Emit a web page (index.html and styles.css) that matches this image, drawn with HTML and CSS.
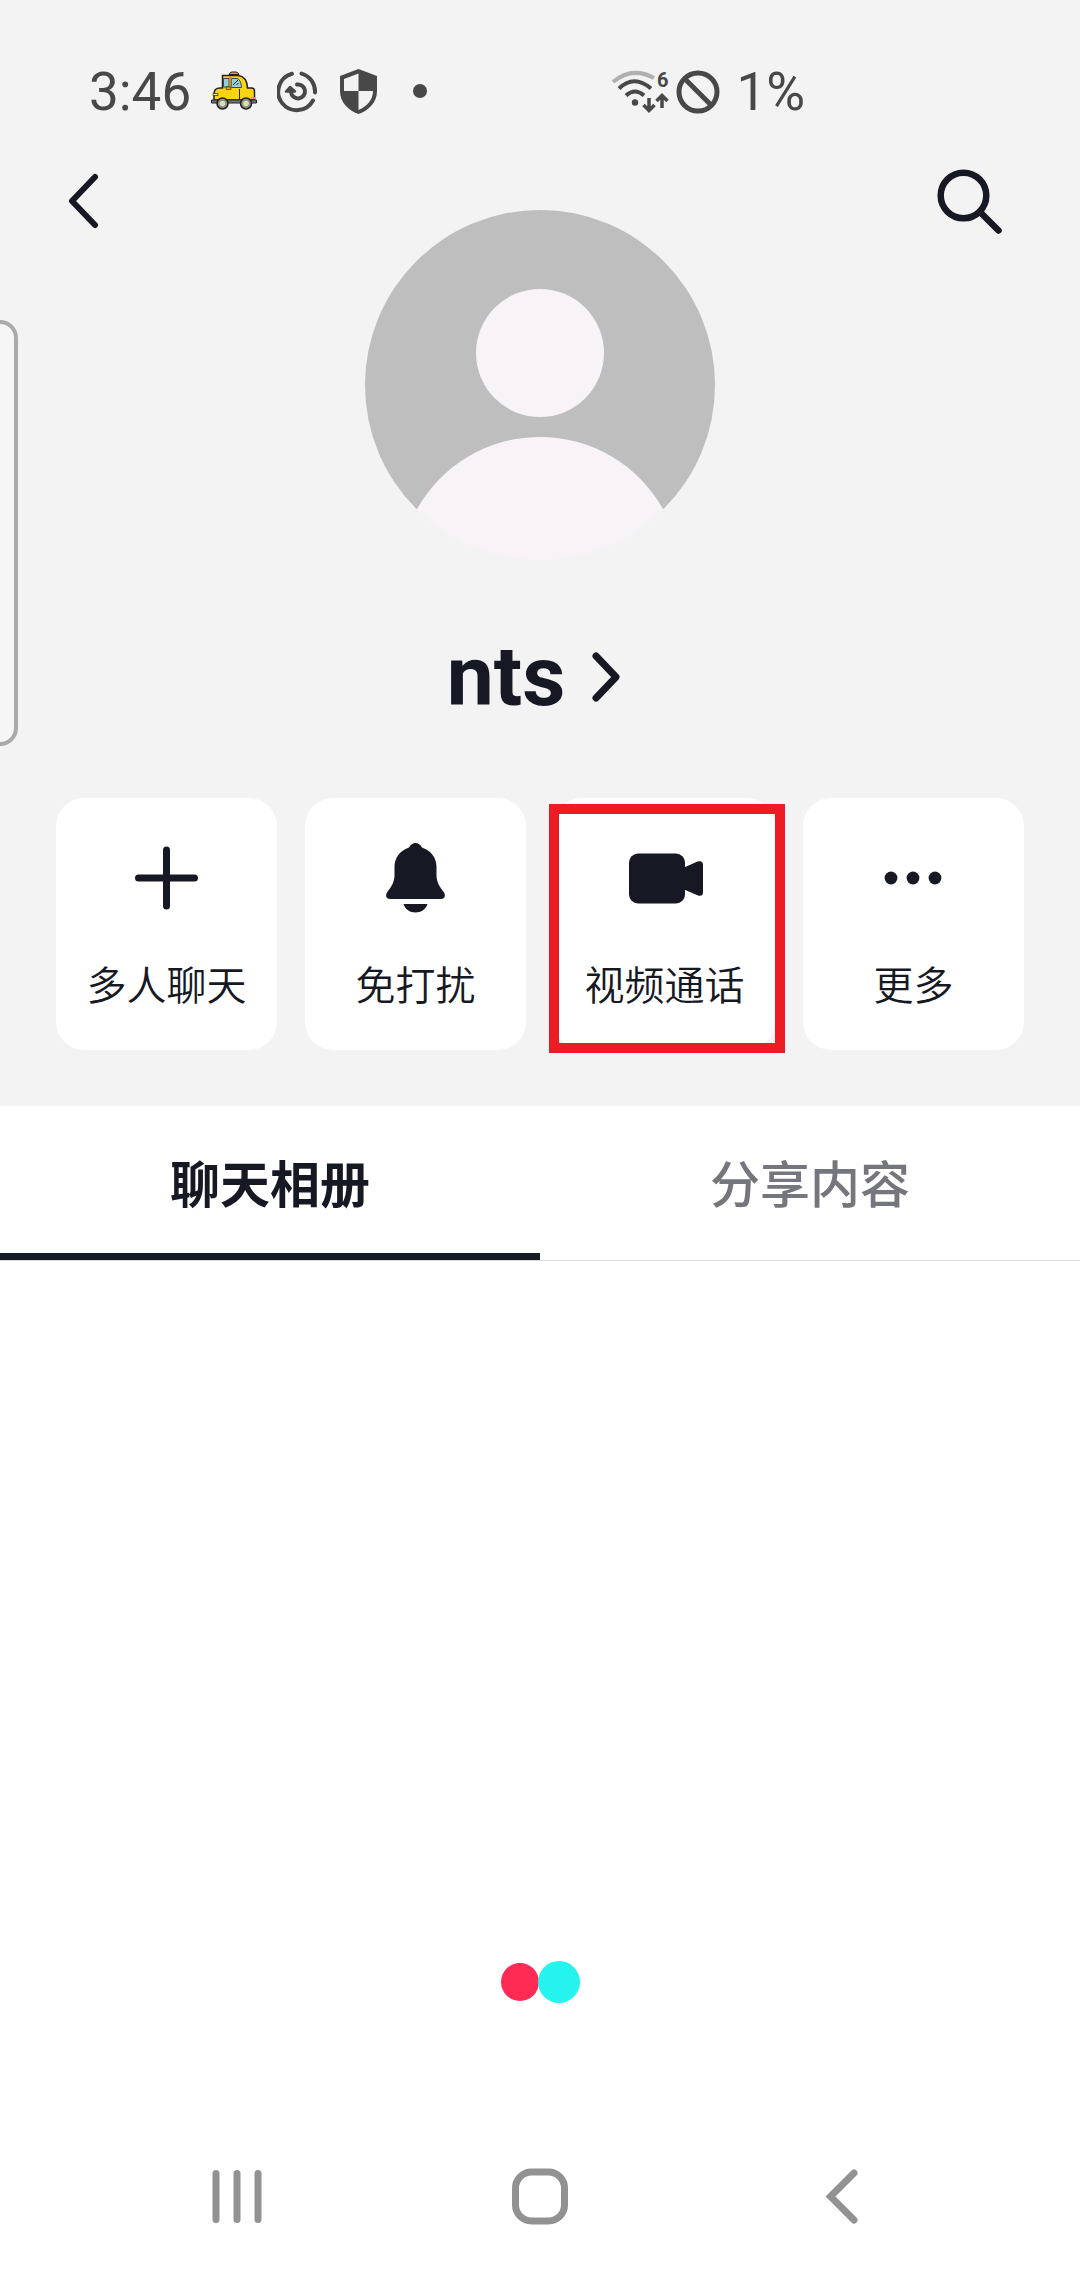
FILE: index.html
```html
<!DOCTYPE html>
<html lang="zh-CN">
<head>
<meta charset="utf-8">
<meta name="viewport" content="width=device-width, initial-scale=1">
<title>nts</title>
<link rel="stylesheet" href="styles.css">
</head>
<body>
<div class="screen">
  <header class="top">
    <div class="status">
      <div class="status-group status-left">
        <span>3:46</span>
        <svg width="48" height="42" viewBox="0 0 48 42" aria-hidden="true">
          <path d="M19 3.500q1-2.500 3-2.500h4q2 0 3 2.500z" fill="#f6a021" stroke="#222" stroke-width="1"/>
          <path d="M12.500 17V4.500H28q9 1 9.500 12.500h4q3 0 3 3v9H4v-6q0-6 6-6z" fill="#fbd40f" stroke="#222" stroke-width="1.500"/>
          <path d="M13.500 7.500H19V16h-5.500zM21.500 7.500H27q4 1 4.500 9h-10z" fill="#8fd2de" stroke="#445" stroke-width="1"/>
          <path d="M19.500 5.500h2V17h-2z" fill="#d98a16"/>
          <path d="m23 14 5-5M26.500 14l2-2" stroke="#222" fill="none"/>
          <path d="M16 16h5v2.500h-5z" fill="#d9a90d" stroke="#222" stroke-width=".6"/>
          <path d="M29.500 18v10" stroke="#222" stroke-width="1"/>
          <path d="M3 22.500h5v2H3z" fill="#fff3a0" stroke="#222" stroke-width=".7"/>
          <path d="M41 26h5v2h-5z" fill="#ff7896"/>
          <path d="M1.500 29h45v3h-45z" fill="#74777a" stroke="#222"/>
          <g fill="#8c8f88" stroke="#222" stroke-width="1.500"><circle cx="12.500" cy="32.500" r="5.500"/><circle cx="36" cy="32.500" r="5.500"/></g>
          <g fill="#dfdcae"><circle cx="12.500" cy="32.500" r="2.800"/><circle cx="36" cy="32.500" r="2.800"/></g>
        </svg>
        <svg width="42" height="42" viewBox="0 0 42 42" fill="none" stroke="#484848" stroke-width="4" stroke-linecap="round" aria-hidden="true">
          <path d="M15 2.800A18.500 18.500 0 1 0 36 29.500M24.500 2.600A18.500 18.500 0 0 1 38 21.500"/>
          <path d="M20 13.500A7 7 0 1 1 14 21"/>
          <path d="m9 20.500 4-4.500 5 4.500z" fill="#484848" stroke-width="2.500" stroke-linejoin="round"/>
        </svg>
        <svg width="42" height="46" viewBox="0 0 42 46" aria-hidden="true">
          <path d="M20.500 0 39 7v15c0 11-8 19.500-18.500 23C10 41.500 2 33 2 22V7z" fill="#484848"/>
          <path d="M20.500 4.500V22H6V10zM20.500 22H35c0 9-6 15.500-14.500 19z" fill="#f2f2f2"/>
        </svg>
        <svg width="42" height="42" viewBox="0 0 42 42" aria-hidden="true"><circle cx="21" cy="20" r="7" fill="#484848"/></svg>
      </div>
      <div class="status-group status-right">
        <svg width="60" height="56" viewBox="0 -6 60 56" fill="none" stroke="#484848" stroke-width="4" aria-hidden="true">
          <path d="M1 12Q20-4 42 8" stroke="#b0b0b0"/>
          <path d="M7 18.500Q22 4 39 18.500M14 25.500q9-8 18 0"/>
          <circle cx="23" cy="32.500" r="3.200" fill="#484848" stroke="none"/>
          <path d="M37 28v12M31.500 35l5.500 5.500 5.500-5.500M50 38V26M44.500 31l5.500-5.500 5.500 5.500" stroke-width="3.500"/>
          <text x="45" y="17" class="wifi-gen">6</text>
        </svg>
        <svg width="44" height="44" viewBox="0 0 44 44" fill="none" stroke="#484848" stroke-width="5" aria-hidden="true">
          <circle cx="22" cy="22" r="19"/><path d="m9 9 26 26"/>
        </svg>
        <span class="battery">1%</span>
      </div>
    </div>

    <div class="profile">
      <button class="icon-button" type="button" aria-label="返回">
        <svg width="80" height="80" viewBox="0 0 80 80" fill="none" stroke="#161823" stroke-width="6" stroke-linecap="round" stroke-linejoin="round"><path d="M27 16 4 40l23 24"/></svg>
      </button>
      <svg class="avatar" viewBox="0 0 350 350" role="img" aria-label="头像">
        <clipPath id="round"><circle cx="175" cy="175" r="175"/></clipPath>
        <circle cx="175" cy="175" r="175" fill="#f7f3f7"/>
        <path d="M0 0h350v299H298A141 141 0 0 0 52 299H0z" fill="#bebebe" clip-path="url(#round)"/>
        <circle cx="175" cy="143" r="64" fill="#f7f3f7"/>
      </svg>
      <button class="icon-button" type="button" aria-label="搜索">
        <svg width="80" height="80" viewBox="0 0 80 80" fill="none" stroke="#161823" stroke-width="6.500" stroke-linecap="round"><circle cx="31.500" cy="34.500" r="22.800"/><path d="m48 51 18.500 18.500"/></svg>
      </button>
    </div>

    <button class="name" type="button">
      <span>nts</span>
      <svg width="48" height="56" viewBox="0 0 48 56" fill="none" stroke="#161823" stroke-width="7" stroke-linecap="round" stroke-linejoin="round" aria-hidden="true"><path d="m11 7 20 21-20 21"/></svg>
    </button>

    <div class="actions">
      <button class="card" type="button">
        <svg width="80" height="80" viewBox="0 0 80 80" stroke="#161823" stroke-width="7" stroke-linecap="round" aria-hidden="true"><path d="M39.500 12v56M11.500 40h56"/></svg>
        <span>多人聊天</span>
      </button>
      <button class="card" type="button">
        <svg width="80" height="80" viewBox="0 0 80 80" fill="#161823" aria-hidden="true"><path transform="translate(-.5 0)" d="M33.500 9.500q2.500-4.500 6.500-4.500t6.500 4.500C56 13 61 20 61 29v8c0 7 3 11.500 7.500 17.500C70.500 58 69 61 65.500 61h-51C11 61 9.500 58 11.500 54.500 16 48.500 19 44 19 37v-8c0-9 5-16 14.500-19.500zM28 66h24c-1.500 5-6.500 8.500-12 8.500S29.500 71 28 66z"/></svg>
        <span>免打扰</span>
      </button>
      <button class="card marked" type="button">
        <svg width="80" height="80" viewBox="0 0 80 80" fill="#161823" aria-hidden="true"><rect x="4" y="15.500" width="56" height="50" rx="9"/><path d="m58 30 14.500-6.500Q78 22 78 27v27q0 5-5 3.500L58 51z"/></svg>
        <span>视频通话</span>
      </button>
      <button class="card" type="button">
        <svg width="80" height="80" viewBox="0 0 80 80" fill="#161823" aria-hidden="true"><circle cx="17" cy="40" r="6.400"/><circle cx="39" cy="40" r="6.400"/><circle cx="61" cy="40" r="6.400"/></svg>
        <span>更多</span>
      </button>
    </div>
    <div class="edge-handle" aria-hidden="true"></div>
  </header>

  <div class="tabs" role="tablist">
    <button class="tab tab-active" type="button" role="tab" aria-selected="true">聊天相册</button>
    <button class="tab" type="button" role="tab" aria-selected="false">分享内容</button>
  </div>

  <main class="album">
    <div class="loader" role="status" aria-label="加载中">
      <span class="dot dot-red"></span><span class="dot dot-cyan"></span>
    </div>
  </main>

  <nav class="system-nav">
    <button type="button" aria-label="最近任务"><svg width="60" height="60" viewBox="0 0 60 60" stroke="#929292" stroke-width="7" stroke-linecap="round"><path d="M9 7.500v46M30 7.500v46M51 7.500v46"/></svg></button>
    <button type="button" aria-label="主屏幕"><svg width="60" height="60" viewBox="0 0 60 60" fill="none" stroke="#929292" stroke-width="7"><rect x="5.500" y="6" width="49" height="49" rx="16"/></svg></button>
    <button type="button" aria-label="返回上一页"><svg width="60" height="60" viewBox="0 0 60 60" fill="none" stroke="#929292" stroke-width="7" stroke-linecap="round"><path d="M41 7 17.500 30.500 41 54"/></svg></button>
  </nav>
</div>
</body>
</html>
```
FILE: styles.css
```css
* {
  box-sizing: border-box;
}

body {
  margin: 0;
  background: #fff;
  color: #161823;
  font-family: Roboto, "Noto Sans CJK SC", sans-serif;
}

button {
  margin: 0;
  padding: 0;
  border: 0;
  background: none;
  color: inherit;
  font: inherit;
}

svg {
  display: block;
}

.screen {
  display: flex;
  flex-direction: column;
  min-height: 100vh;
}

.top {
  position: relative;
  padding: 60px 0 56px;
  background: #f3f3f3;
}

/* status bar */
.status {
  display: flex;
  justify-content: space-between;
  height: 64px;
  padding: 0 275px 0 89px;
  color: #484848;
  font-size: 53px;
  line-height: 66px;
}

.status-group {
  display: flex;
  align-items: center;
}

.status-left {
  gap: 19px;
}

.status-right {
  gap: 4px;
}

.battery {
  margin-left: 12px;
}

.wifi-gen {
  fill: #484848;
  stroke: none;
  font-size: 20px;
  font-weight: 700;
}

/* profile */
.profile {
  display: grid;
  grid-template-columns: 1fr 350px 1fr;
  align-items: start;
  padding: 37px 68px 0;
}

.icon-button:last-child {
  justify-self: end;
}

.icon-button:first-child {
  justify-self: start;
}

.avatar {
  width: 100%;
  margin-top: 49px;
}

.name {
  display: flex;
  align-items: center;
  gap: 20px;
  margin: 69px auto 73px;
  font-size: 84px;
  font-weight: 700;
  line-height: 96px;
}

.actions {
  display: grid;
  grid-template-columns: repeat(4, 1fr);
  gap: 28px;
  padding: 0 56px;
}

.card {
  position: relative;
  display: flex;
  flex-direction: column;
  align-items: center;
  gap: 41px;
  padding: 40px 0 43px;
  border-radius: 28px;
  background: #fff;
  font-family: "Noto Sans CJK SC", sans-serif;
  font-size: 40px;
  font-weight: 350;
  line-height: 48px;
}

.marked::after {
  content: "";
  position: absolute;
  inset: 6px -10px -3px -5px;
  border: 10px solid #ed1c24;
}

.edge-handle {
  position: absolute;
  top: 320px;
  left: -20px;
  width: 38px;
  height: 426px;
  border: 4px solid #aaa;
  border-radius: 18px;
  background: #f6f6f6;
}

/* tabs */
.tabs {
  display: grid;
  grid-template-columns: 1fr 1fr;
  border-bottom: 1px solid #dcdcdc;
}

.tab {
  padding: 50px 0 37px;
  border-bottom: 7px solid transparent;
  color: #75757d;
  font-size: 50px;
  font-weight: 500;
  line-height: 60px;
}

.tab-active {
  border-color: #161823;
  color: #161823;
  font-weight: 700;
}

.album {
  display: flex;
  flex: 1;
  align-items: flex-end;
  justify-content: center;
  padding-bottom: 109px;
}

.loader {
  display: flex;
  align-items: center;
}

.dot {
  width: 38px;
  height: 38px;
  border-radius: 50%;
}

.dot-red {
  background: #fe2c55;
}

.dot-cyan {
  width: 42px;
  height: 42px;
  margin-left: -1px;
  background: #25f4ee;
}

.system-nav {
  display: grid;
  grid-template-columns: repeat(3, 1fr);
  justify-items: center;
  padding: 54px 86px;
}
```
